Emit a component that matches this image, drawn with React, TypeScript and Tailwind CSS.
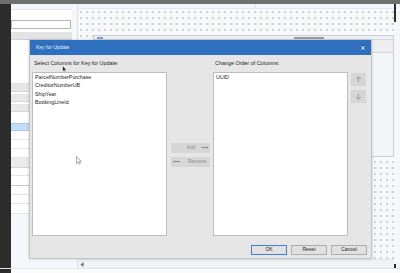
import React from "react";

const leftRows: { h: number; cls: string }[] = [
  { h: 6, cls: "bg-[#f3f5f8] border-b border-[#e2e5e9]" },
  { h: 10, cls: "bg-white" },
  { h: 9, cls: "bg-white border border-[#b4b4b4] mr-[1px]" },
  { h: 3, cls: "bg-white" },
  { h: 8, cls: "bg-[#e3e3e3] border-b border-[#d0d0d0]" },
  { h: 44, cls: "bg-white border-b border-[#e4e4e4]" },
  { h: 8, cls: "bg-[#e6e6e6] border-b border-[#d2d2d2]" },
  { h: 2, cls: "bg-white" },
  { h: 8, cls: "bg-[#e8e8e8] border-b border-[#d6d6d6]" },
  { h: 2, cls: "bg-white" },
  { h: 8, cls: "bg-[#e8e8e8] border-b border-[#d6d6d6]" },
  { h: 11, cls: "bg-white" },
  { h: 8, cls: "bg-[#c5dcf5] border-y border-[#a9c8ec]" },
  { h: 9, cls: "bg-white border-b border-[#e6e6e6]" },
  { h: 9, cls: "bg-white border-b border-[#e6e6e6]" },
  { h: 9, cls: "bg-white border-b border-[#e6e6e6]" },
  { h: 10, cls: "bg-[#ebebeb] border-b border-[#d6d6d6]" },
  { h: 8, cls: "bg-white border-b border-[#e4e4e4]" },
  { h: 10, cls: "bg-white border-b border-[#c8c8c8]" },
  { h: 9, cls: "bg-white border-b border-[#e4e4e4]" },
  { h: 9, cls: "bg-white border-b border-[#e4e4e4]" },
  { h: 10, cls: "bg-white border-b border-[#e4e4e4]" },
];

const keyColumns = ["ParcelNumberPurchase", "CreditorNumberUB", "ShipYear", "BookingLineId"];

function Arrow({ dir }: { dir: "up" | "down" }) {
  return (
    <svg width="7" height="7" viewBox="0 0 10 10" fill="none" stroke="#9b9b9b" strokeWidth="1.3">
      {dir === "up" ? (
        <path d="M5 9V1M1.5 4.5 5 1l3.5 3.5" />
      ) : (
        <path d="M5 1v8M1.5 5.5 5 9l3.5-3.5" />
      )}
    </svg>
  );
}

export default function App() {
  return (
    <div
      className="relative w-[400px] h-[273px] overflow-hidden bg-[#f4f6f8]"
      style={{ fontFamily: '"Liberation Sans", Arial, sans-serif' }}
    >
      <div className="h-[4px] bg-[#6f6f6f]" />
      <div className="flex h-[264px]">
        <div className="w-[11px] bg-[#2c2c2c]" />
        <div className="w-[61px] flex flex-col bg-[#f5f7fa]">
          {leftRows.map((r, i) => (
            <div key={i} className={r.cls} style={{ height: r.h }} />
          ))}
        </div>
        <div className="w-[6px] bg-[#f5f7fa] border-r border-[#dde0e4]" />
        <div className="flex-1 flex flex-col">
          <div className="h-[5px] flex bg-[#f1f4f8] border-b border-[#e2e5ea]">
            <div className="w-[178px] border-r border-[#dfe2e6]" />
          </div>
          <div className="flex-1 flex flex-col bg-[#f7f8fa] bg-[radial-gradient(circle,#cdd1d6_0.7px,transparent_1px)] bg-[size:6px_6px] pt-[26px] pl-[15px]">
            <div className="h-[122px] bg-[#f3f5f7] border border-[#c9ccd0] flex flex-col">
              <div className="h-[4px] flex items-center gap-[3px] pl-[3px] border-b border-[#d3d6da] bg-[#eef0f3]">
                <div className="w-[6px] h-[2px] bg-[#7fa3cf]" />
                <div className="ml-[188px] w-[30px] h-[2px] bg-[#9a9da2]" />
              </div>
              <div className="h-[13px] bg-[#eceef1] border-b border-[#d3d6da]" />
            </div>
          </div>
          <div className="h-[9px] bg-[#f1f2f4] border-t border-[#e3e5e8] flex items-center pl-[2px]">
            <svg width="4" height="5" viewBox="0 0 4 5">
              <path d="M3.5 0 0.5 2.5 3.5 5Z" fill="#6a6a6a" />
            </svg>
          </div>
        </div>
        <div className="w-[6px] flex flex-col">
          <div className="h-[18px] bg-[#2c2c2c] w-[2px]" />
          <div className="flex-1 bg-[#f4f6f8]" />
          <div className="h-[4px] bg-[#2c2c2c] w-[2px]" />
        </div>
      </div>
      <div className="h-[5px] flex bg-[#fbfbfc] border-t border-[#e3e5e8]">
        <div className="w-[11px] bg-[#2c2c2c]" />
      </div>

      {/* dialog */}
      <div className="absolute left-[29px] top-[40px] w-[343px] h-[219px] flex flex-col bg-[#e6e6e6] border-x border-b border-[#c4c4c4] shadow-[0_0_3px_rgba(0,0,0,0.18)]">
        <div className="h-[15px] shrink-0 flex items-center justify-between bg-[#2e6fbe] pl-[6px] pr-[6px]">
          <span className="text-[5px] text-[#e8f0fa] leading-none">Key for Update</span>
          <svg width="4" height="4" viewBox="0 0 4 4" stroke="#ffffff" strokeWidth="0.9">
            <path d="M0.3 0.3 3.7 3.7M3.7 0.3 0.3 3.7" />
          </svg>
        </div>
        <div className="flex pl-[2px]">
          <div className="w-[135px] flex flex-col">
            <div className="h-[17px] flex items-center pl-[2px] text-[5.4px] text-[#1f1f1f]">
              Select Columns for Key for Update:
            </div>
            <div className="h-[164px] bg-white border border-[#bdbdbd] pl-[2px] pt-[1px] flex flex-col">
              {keyColumns.map((c) => (
                <div key={c} className="h-[8.3px] flex items-center text-[5.3px] text-[#222]">
                  {c}
                </div>
              ))}
            </div>
          </div>
          <div className="w-[46px] flex flex-col items-center justify-center gap-[4px] pt-[19px]">
            <div className="w-[39px] h-[10px] bg-[#d6d6d6] flex items-center justify-end pr-[2px] gap-[5px] text-[5px] text-[#8d8d8d]">
              <span>Add</span>
              <span>⟶</span>
            </div>
            <div className="w-[39px] h-[10px] bg-[#d6d6d6] flex items-center justify-between pl-[2px] pr-[3px] text-[5px] text-[#8d8d8d]">
              <span>⟵</span>
              <span>Remove</span>
            </div>
          </div>
          <div className="w-[135px] flex flex-col">
            <div className="h-[17px] flex items-center pl-[2px] text-[5.4px] text-[#1f1f1f]">
              Change Order of Columns:
            </div>
            <div className="h-[164px] bg-white border border-[#bdbdbd] pl-[2px] pt-[1px]">
              <div className="h-[8.3px] flex items-center text-[5.3px] text-[#222]">UUID</div>
            </div>
          </div>
          <div className="pl-[3px] pt-[18px] flex flex-col gap-[4px]">
            <div className="w-[15px] h-[13px] bg-[#d5d5d5] flex items-center justify-center">
              <Arrow dir="up" />
            </div>
            <div className="w-[15px] h-[13px] bg-[#d5d5d5] flex items-center justify-center">
              <Arrow dir="down" />
            </div>
          </div>
        </div>
        <div className="mt-[9px] flex justify-end gap-[4px] pr-[4px]">
          <div className="w-[36px] h-[10px] bg-[#e1e1e1] border border-[#3f80d4] flex items-center justify-center text-[5px] text-[#222]">
            OK
          </div>
          <div className="w-[36px] h-[10px] bg-[#e1e1e1] border border-[#adadad] flex items-center justify-center text-[5px] text-[#222]">
            Reset
          </div>
          <div className="w-[36px] h-[10px] bg-[#e1e1e1] border border-[#adadad] flex items-center justify-center text-[5px] text-[#222]">
            Cancel
          </div>
        </div>
      </div>

      {/* mouse pointers */}
      <svg className="absolute left-[62px] top-[65px]" width="5" height="8" viewBox="0 0 5 8">
        <path d="M0.5 0.5V7l1.5-1.5 1 2 1-0.5-1-2H4.5Z" fill="#222" stroke="#fff" strokeWidth="0.6" />
      </svg>
      <svg className="absolute left-[76px] top-[156px]" width="6" height="9" viewBox="0 0 6 9">
        <path d="M0.5 0.5V7.5l1.7-1.6 1.1 2.3 1.1-0.5-1.1-2.2H5.3Z" fill="#f4f4f4" stroke="#7d7d7d" strokeWidth="0.6" />
      </svg>
    </div>
  );
}
